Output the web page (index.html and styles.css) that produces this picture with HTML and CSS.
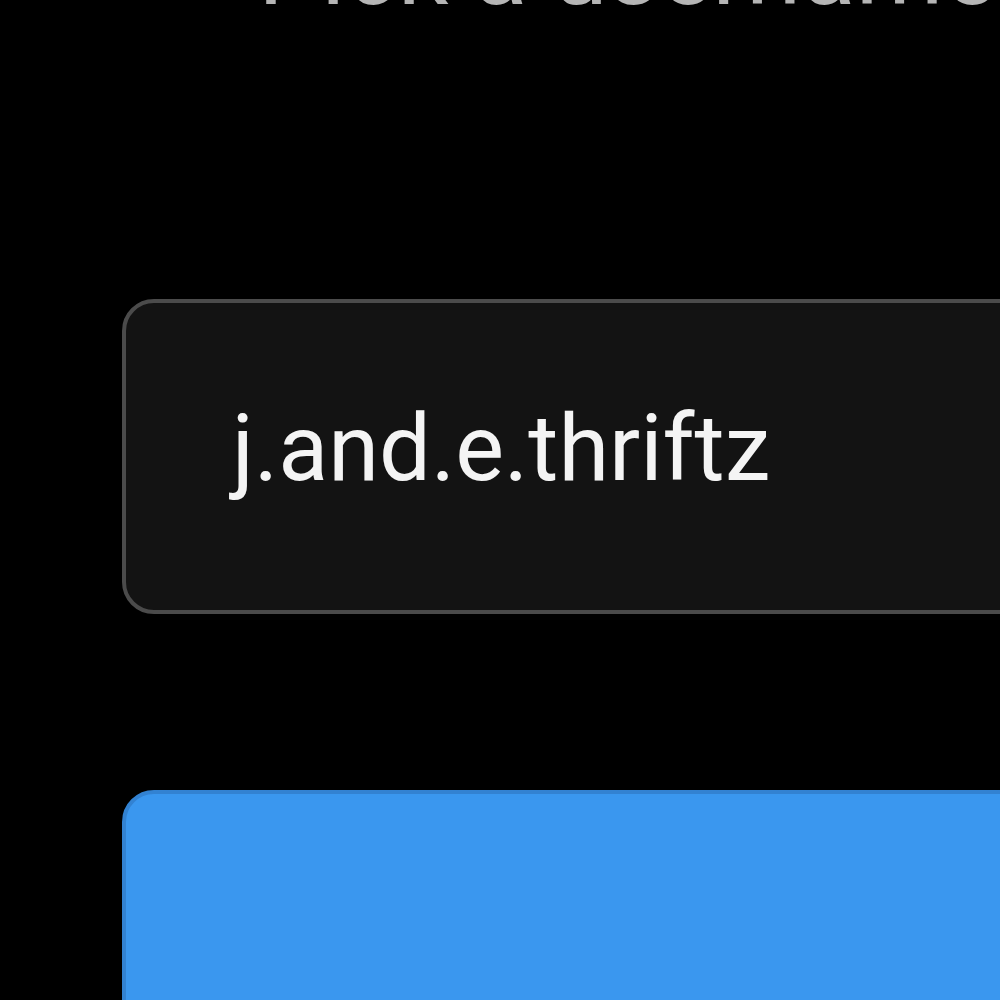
FILE: index.html
```html
<!DOCTYPE html>
<html>
<head>
<meta charset="utf-8">
<link rel="stylesheet" href="styles.css">
</head>
<body>
<div class="screen">
  <div class="title">Pick a username for your account</div>
  <div class="field"><span class="value">j.and.e.thriftz</span></div>
  <div class="button"></div>
</div>
</body>
</html>
```
FILE: styles.css
```css
html, body {
  margin: 0;
  padding: 0;
  background: #000;
}
.screen {
  width: 1000px;
  height: 1000px;
  overflow: hidden;
  padding-left: 122px;
  box-sizing: border-box;
  font-family: Roboto, "Noto Sans", sans-serif;
}
.title {
  margin: -80px 0 0 136px;
  font-size: 100px;
  line-height: 100px;
  color: #b5b5b5;
  white-space: nowrap;
}
.field {
  margin-top: 279px;
  width: 1000px;
  height: 315px;
  box-sizing: border-box;
  border: 4px solid #4b4b4b;
  border-radius: 32px;
  background: #131313;
  display: flex;
  align-items: center;
  padding-left: 106px;
}
.value {
  font-size: 92px;
  line-height: 92px;
  color: #f4f4f4;
  white-space: nowrap;
  position: relative;
  top: -8px;
}
.button {
  margin-top: 176px;
  width: 1000px;
  height: 400px;
  box-sizing: border-box;
  border: 4px solid #3282d2;
  border-radius: 32px;
  background: #3a97ef;
}
```
